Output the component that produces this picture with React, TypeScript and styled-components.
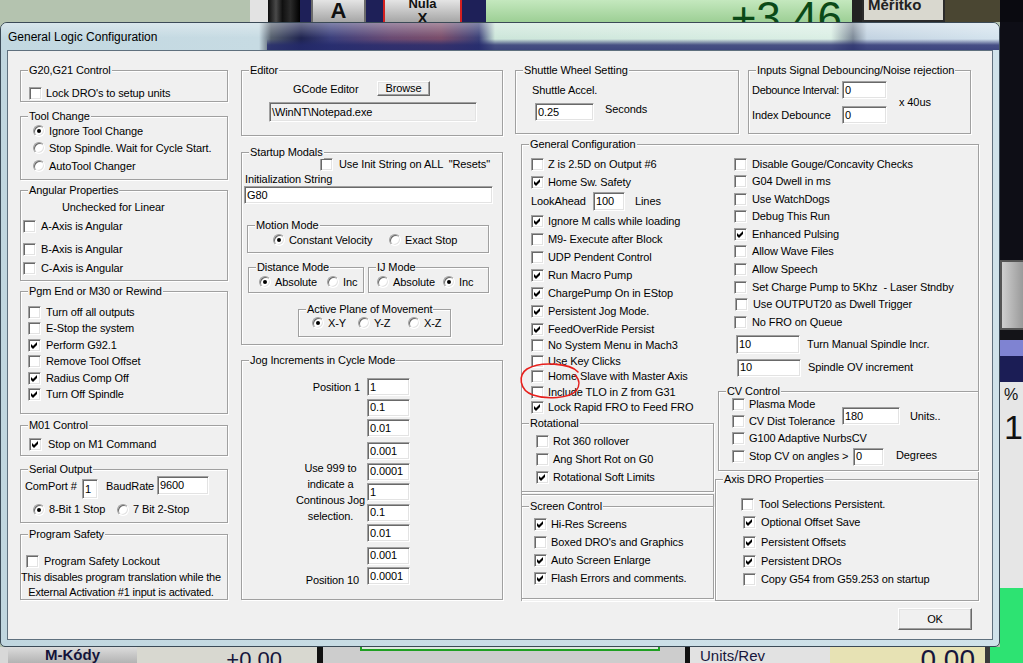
import React from 'react';
import styled, { createGlobalStyle } from 'styled-components';

const GlobalStyle = createGlobalStyle`
  html, body {
    margin: 0;
    padding: 0;
  }
  body {
    width: 1023px;
    height: 663px;
    overflow: hidden;
    background: #14141c;
    font-family: 'Liberation Sans', Arial, sans-serif;
    font-size: 11px;
    letter-spacing: -0.1px;
    color: #000;
  }
`;

const Desktop = styled.div`
  width: 1023px;
  height: 663px;
  display: grid;
  grid-template-columns: 1000px 23px;
  grid-template-rows: 22px 625px 16px;
  background: #b4c3af;
  overflow: hidden;
`;

/* ---------- Mach3 screen behind the dialog ---------- */

const TopStrip = styled.div`
  grid-column: 1 / -1;
  display: flex;
  overflow: hidden;
  letter-spacing: 0;
`;

const BottomStrip = styled.div`
  grid-column: 1 / -1;
  display: flex;
  overflow: hidden;
  letter-spacing: 0;
`;

const SideStrip = styled.div`
  grid-column: 2;
  grid-row: 2;
  display: flex;
  flex-direction: column;
  overflow: hidden;
  letter-spacing: 0;
`;

const Patch = styled.div<{ $w: number; $bg: string }>`
  flex: none;
  width: ${(p) => p.$w}px;
  background: ${(p) => p.$bg};
`;

const VPatch = styled.div<{ $h: number; $bg: string }>`
  flex: none;
  height: ${(p) => p.$h}px;
  background: ${(p) => p.$bg};
`;

const KeyCap = styled.div<{ $w: number; $edge?: string }>`
  flex: none;
  width: ${(p) => p.$w}px;
  box-sizing: border-box;
  background: linear-gradient(to bottom, #e4e4e4, #a6a6a6);
  border-left: 2px solid ${(p) => p.$edge || '#6a6a6a'};
  border-right: 2px solid ${(p) => p.$edge || '#6a6a6a'};
  display: flex;
  flex-direction: column;
  align-items: center;
  font-weight: bold;
  color: #111;
  overflow: hidden;
`;

const KeyText = styled.span<{ $size: number; $mt?: number }>`
  font-size: ${(p) => p.$size}px;
  line-height: ${(p) => p.$size}px;
  margin-top: ${(p) => p.$mt ?? 0}px;
`;

const BigDro = styled.div<{ $w: number }>`
  flex: none;
  width: ${(p) => p.$w}px;
  box-sizing: border-box;
  padding-right: 10px;
  background: linear-gradient(to bottom, #c4e8be, #9dcf95);
  color: #0b4a17;
  font-size: 44px;
  line-height: 36px;
  text-align: right;
  overflow: hidden;
`;

const ScaleBox = styled.div<{ $w: number }>`
  flex: none;
  width: ${(p) => p.$w}px;
  box-sizing: border-box;
  border: 2px solid #2b2b2b;
  border-top: none;
  background: #d9d8cf;
  font-size: 15px;
  font-weight: bold;
  line-height: 10px;
  padding-left: 4px;
  color: #222;
  overflow: hidden;
`;

const SideKey = styled.div<{ $h: number }>`
  flex: none;
  height: ${(p) => p.$h}px;
  box-sizing: border-box;
  border: 2px solid #555;
  border-right: none;
  background: linear-gradient(to right, #cfcfcf, #9a9a9a);
`;

const SideReadout = styled.div<{ $h: number }>`
  flex: none;
  height: ${(p) => p.$h}px;
  box-sizing: border-box;
  padding: 4px 0 0 4px;
  background: #e6e6e6;
  color: #111;
  display: flex;
  flex-direction: column;
  overflow: hidden;
`;

const ReadoutSign = styled.span`
  font-size: 16px;
  line-height: 18px;
`;

const ReadoutBig = styled.span`
  font-size: 34px;
  line-height: 34px;
  margin-top: 6px;
`;

const BottomKey = styled.div<{ $w: number }>`
  flex: none;
  width: ${(p) => p.$w}px;
  background: linear-gradient(to bottom, #dcdcdc, #b3b3b3);
  color: #14143a;
  font-weight: bold;
  font-size: 15px;
  line-height: 16px;
  text-align: center;
  overflow: hidden;
`;

const SmallDro = styled.div<{ $w: number; $bg: string; $size: number; $pr: number }>`
  flex: none;
  width: ${(p) => p.$w}px;
  box-sizing: border-box;
  padding-right: ${(p) => p.$pr}px;
  background: ${(p) => p.$bg};
  color: #16163c;
  font-size: ${(p) => p.$size}px;
  line-height: 26px;
  text-align: right;
  overflow: hidden;
`;

const GaugeArea = styled.div<{ $w: number }>`
  flex: none;
  width: ${(p) => p.$w}px;
  background: #cdcdcd;
`;

const GaugeBar = styled.div`
  margin-left: 37px;
  width: 300px;
  height: 4px;
  box-sizing: border-box;
  border: 2px solid #1f9f22;
  border-top: none;
  background: #dfe9df;
`;

const Caption = styled.div<{ $w: number }>`
  flex: none;
  width: ${(p) => p.$w}px;
  box-sizing: border-box;
  padding-left: 10px;
  background: #e2e2e2;
  color: #16163c;
  font-size: 15px;
  line-height: 18px;
  overflow: hidden;
`;

/* ---------- the dialog window ---------- */

const Window = styled.div`
  grid-column: 1;
  grid-row: 2;
  box-sizing: border-box;
  display: flex;
  flex-direction: column;
  border: 1px solid #3b4a57;
  border-radius: 7px 7px 5px 5px;
  background: linear-gradient(to right, #c0d6df, #c9dde5 40%, #d0e2ea);
  overflow: hidden;
`;

const TitleBar = styled.div`
  flex: none;
  height: 27px;
  display: flex;
  align-items: center;
  padding-left: 7px;
  font-size: 12px;
  letter-spacing: 0;
  color: #000;
  background:
    linear-gradient(to bottom, rgba(255, 255, 255, 0.35), rgba(255, 255, 255, 0) 55%),
    linear-gradient(to bottom, rgba(36, 42, 108, 0) 16px, rgba(36, 42, 108, 0.8) 22px, rgba(36, 42, 108, 0.85) 27px) right top / calc(100% - 266px) 100% no-repeat,
    linear-gradient(
      to right,
      #c2d8e1 0,
      #c7dbe3 258px,
      #56606e 270px,
      #1f2450 300px,
      #3b3f7c 330px,
      #6a4a72 390px,
      #7a4d6a 440px,
      #3a4078 478px,
      #cde6da 494px,
      #dbefe5 830px,
      #7d8a98 852px,
      #c4d4e2 866px,
      #d5e4ee 100%
    );
`;

const Client = styled.div`
  position: relative;
  flex: 1;
  margin: 0 6px 6px;
  border: 1px solid #5f707e;
  background: #f0f0f0;
  display: flex;
  flex-direction: column;
  padding: 19px 0 0 12px;
`;

const Columns = styled.div`
  display: grid;
  grid-template-columns: 208px 262px 464px;
  column-gap: 13px;
  align-items: start;
`;

const Column = styled.div<{ $ml?: number }>`
  display: flex;
  flex-direction: column;
  margin-left: ${(p) => p.$ml ?? 0}px;
`;

const Footer = styled.div`
  display: flex;
  justify-content: flex-end;
  padding-right: 20px;
  margin-top: 7px;
`;

/* ---------- win32 classic controls ---------- */

const Group = styled.div<{ $h: number; $w?: number; $mt?: number; $ml?: number; $open?: boolean }>`
  position: relative;
  flex: none;
  box-sizing: border-box;
  height: ${(p) => p.$h}px;
  width: ${(p) => (p.$w ? `${p.$w}px` : 'auto')};
  margin-top: ${(p) => p.$mt ?? 0}px;
  margin-left: ${(p) => p.$ml ?? 0}px;
  border: 1px solid #a0a0a0;
  ${(p) => p.$open && 'border-bottom: none;'}
  box-shadow: inset 1px 1px 0 #fff, 1px 1px 0 #fff;
`;

const Legend = styled.span`
  position: absolute;
  top: -7px;
  left: 7px;
  padding: 0 1px;
  background: #f0f0f0;
  line-height: 13px;
  white-space: nowrap;
`;

const Divider = styled.div`
  flex: none;
  width: 193px;
  height: 12px;
  box-sizing: border-box;
  margin: 2px 0 0 -1px;
  border: 1px solid #a0a0a0;
  border-bottom: none;
  box-shadow: inset 1px 1px 0 #fff;
`;

const Stack = styled.div<{ $pt?: number; $pl?: number; $gap?: number }>`
  display: flex;
  flex-direction: column;
  align-items: flex-start;
  padding-top: ${(p) => p.$pt ?? 0}px;
  padding-left: ${(p) => p.$pl ?? 0}px;
  gap: ${(p) => p.$gap ?? 0}px;
`;

const Row = styled.div<{ $h?: number; $mt?: number; $ml?: number; $align?: string }>`
  display: flex;
  flex: none;
  align-items: ${(p) => p.$align ?? 'center'};
  height: ${(p) => (p.$h ? `${p.$h}px` : 'auto')};
  margin-top: ${(p) => p.$mt ?? 0}px;
  margin-left: ${(p) => p.$ml ?? 0}px;
`;

const OptionRow = styled.div<{ $mt?: number; $ml?: number; $gap: number; $w?: number }>`
  display: flex;
  flex: none;
  align-items: center;
  height: 13px;
  width: ${(p) => (p.$w ? `${p.$w}px` : 'auto')};
  margin-top: ${(p) => p.$mt ?? 0}px;
  margin-left: ${(p) => p.$ml ?? 0}px;
  gap: ${(p) => p.$gap}px;
  line-height: 13px;
  white-space: pre;
`;

const CheckBox = styled.span`
  flex: none;
  width: 13px;
  height: 13px;
  box-sizing: border-box;
  border: 1px solid;
  border-color: #a0a0a0 #fff #fff #a0a0a0;
  box-shadow: inset 1px 1px 0 #696969, inset -1px -1px 0 #e3e3e3;
  background: #fff;
  display: flex;
  align-items: center;
  justify-content: center;
`;

const RadioDot = styled.span<{ $on?: boolean }>`
  flex: none;
  width: 12px;
  height: 12px;
  box-sizing: border-box;
  border-radius: 50%;
  border: 1px solid;
  border-color: #a0a0a0 #fff #fff #a0a0a0;
  box-shadow: inset 1px 1px 0 #696969, inset -1px -1px 0 #e3e3e3;
  background: #fff;
  display: flex;
  align-items: center;
  justify-content: center;

  &::after {
    content: '';
    width: 4px;
    height: 4px;
    border-radius: 50%;
    background: ${(p) => (p.$on ? '#000' : 'transparent')};
  }
`;

const Edit = styled.div<{ $w: number; $h?: number; $mt?: number; $ml?: number; $off?: boolean }>`
  flex: none;
  box-sizing: border-box;
  width: ${(p) => p.$w}px;
  height: ${(p) => p.$h ?? 19}px;
  margin-top: ${(p) => p.$mt ?? 0}px;
  margin-left: ${(p) => p.$ml ?? 0}px;
  border: 1px solid;
  border-color: #a0a0a0 #fff #fff #a0a0a0;
  box-shadow: inset 1px 1px 0 #696969, inset -1px -1px 0 #e3e3e3;
  background: ${(p) => (p.$off ? '#f0f0f0' : '#fff')};
  padding-left: 2px;
  display: flex;
  align-items: center;
  line-height: 13px;
  white-space: nowrap;
  overflow: hidden;
`;

const PushButton = styled.div<{ $w: number; $h: number }>`
  flex: none;
  box-sizing: border-box;
  width: ${(p) => p.$w}px;
  height: ${(p) => p.$h}px;
  border: 1px solid;
  border-color: #fff #696969 #696969 #fff;
  box-shadow: inset -1px -1px 0 #a0a0a0, inset 1px 1px 0 #e3e3e3;
  background: #f0f0f0;
  display: flex;
  align-items: center;
  justify-content: center;
  line-height: 13px;
`;

const Label = styled.span<{ $w?: number; $mt?: number; $ml?: number }>`
  display: block;
  flex: none;
  width: ${(p) => (p.$w ? `${p.$w}px` : 'auto')};
  margin-top: ${(p) => p.$mt ?? 0}px;
  margin-left: ${(p) => p.$ml ?? 0}px;
  line-height: 13px;
  white-space: pre;
`;

const TightLabel = styled(Label)`
  letter-spacing: -0.3px;
`;

const Note = styled.div<{ $w: number; $mt?: number; $ml?: number }>`
  width: ${(p) => p.$w}px;
  margin-top: ${(p) => p.$mt ?? 0}px;
  margin-left: ${(p) => p.$ml ?? 0}px;
  line-height: 15px;
  text-align: center;
  white-space: pre;
  letter-spacing: -0.2px;
`;

const DebounceGrid = styled.div`
  display: grid;
  grid-template-columns: 90px 45px auto;
  row-gap: 7px;
  align-items: center;
  padding: 10px 0 0 3px;
`;

const UnitNote = styled.span`
  grid-column: 3;
  grid-row: 1 / 3;
  margin-left: 12px;
  line-height: 13px;
`;

const JogGrid = styled.div`
  display: grid;
  grid-template-columns: 125px 43px;
  padding-top: 17px;
`;

const JogLabel = styled.div<{ $row: string; $pr: number; $pt?: number }>`
  grid-column: 1;
  grid-row: ${(p) => p.$row};
  justify-self: end;
  align-self: center;
  padding-right: ${(p) => p.$pr}px;
  padding-top: ${(p) => p.$pt ?? 0}px;
  text-align: center;
  line-height: 16px;
  white-space: pre;
`;

const JogEdit = styled(Edit)<{ $row: number }>`
  grid-column: 2;
  grid-row: ${(p) => p.$row};
`;

const ConfigGrid = styled.div`
  display: grid;
  grid-template-columns: 191px 265px;
  align-items: start;
`;

const Annotation = styled.svg`
  position: absolute;
  left: 511px;
  top: 311px;
  overflow: visible;
  pointer-events: none;
`;

/* ---------- small building blocks ---------- */

type OptProps = {
  on?: boolean;
  mt?: number;
  ml?: number;
  gap?: number;
  w?: number;
  children: React.ReactNode;
};

const Tick = () => (
  <svg width="7" height="7" viewBox="0 0 7 7">
    <path d="M0 2L2 4L6 0V3L2 7L0 5Z" fill="#000" />
  </svg>
);

const Check = ({ on, mt, ml, gap, w, children }: OptProps) => (
  <OptionRow $mt={mt} $ml={ml} $gap={gap ?? 5} $w={w}>
    <CheckBox>{on && <Tick />}</CheckBox>
    <span>{children}</span>
  </OptionRow>
);

const Radio = ({ on, mt, ml, gap, w, children }: OptProps) => (
  <OptionRow $mt={mt} $ml={ml} $gap={gap ?? 4} $w={w}>
    <RadioDot $on={on} />
    <span>{children}</span>
  </OptionRow>
);

const jogSteps = ['1', '0.1', '0.01', '0.001', '0.0001', '1', '0.1', '0.01', '0.001', '0.0001'];
const jogGaps = [0, 2.5, 2.5, 5.3, 2.5, 2.5, 2.5, 2.5, 4.4, 2.5];

const App = () => {
  return (
    <>
      <GlobalStyle />
      <Desktop>
        <TopStrip>
          <Patch $w={250} $bg="#b4c3af" />
          <Patch $w={18} $bg="#e3e3e3" />
          <Patch $w={32} $bg="linear-gradient(to right, #0c0c0c, #4a4a4a 25%, #101010 45%, #2a2a2a 70%, #000)" />
          <Patch $w={11} $bg="#1e2058" />
          <KeyCap $w={55}>
            <KeyText $size={22} $mt={0}>A</KeyText>
          </KeyCap>
          <Patch $w={17} $bg="#1e2058" />
          <KeyCap $w={79} $edge="#d42020">
            <KeyText $size={13} $mt={-3}>Nula</KeyText>
            <KeyText $size={15}>X</KeyText>
          </KeyCap>
          <Patch $w={24} $bg="#1e2058" />
          <BigDro $w={366}>+3.46</BigDro>
          <Patch $w={10} $bg="#222" />
          <ScaleBox $w={83}>Měřítko</ScaleBox>
          <Patch $w={55} $bg="#4a4632" />
          <Patch $w={23} $bg="#0a0a10" />
        </TopStrip>

        <Window>
          <TitleBar>General Logic Configuration</TitleBar>
          <Client>
            <Columns>
              <Column>
                <Group $h={32}>
                  <Legend>G20,G21 Control</Legend>
                  <Stack $pt={15.5} $pl={8}>
                    <Check gap={4}>Lock DRO's to setup units</Check>
                  </Stack>
                </Group>

                <Group $h={64} $mt={14}>
                  <Legend>Tool Change</Legend>
                  <Stack $pt={7.5} $pl={12} $gap={4}>
                    <Radio on>Ignore Tool Change</Radio>
                    <Radio>Stop Spindle. Wait for Cycle Start.</Radio>
                    <Radio mt={1}>AutoTool Changer</Radio>
                  </Stack>
                </Group>

                <Group $h={91} $mt={10}>
                  <Legend>Angular Properties</Legend>
                  <Stack $pt={9.5} $pl={2}>
                    <Label $ml={39}>Unchecked for Linear</Label>
                    <Check mt={6}>A-Axis is Angular</Check>
                    <Check mt={10}>B-Axis is Angular</Check>
                    <Check mt={6}>C-Axis is Angular</Check>
                  </Stack>
                </Group>

                <Group $h={123} $mt={10}>
                  <Legend>Pgm End or M30 or Rewind</Legend>
                  <Stack $pt={13.5} $pl={7} $gap={3.6}>
                    <Check>Turn off all outputs</Check>
                    <Check>E-Stop the system</Check>
                    <Check on>Perform G92.1</Check>
                    <Check>Remove Tool Offset</Check>
                    <Check on>Radius Comp Off</Check>
                    <Check on>Turn Off Spindle</Check>
                  </Stack>
                </Group>

                <Group $h={31} $mt={11}>
                  <Legend>M01 Control</Legend>
                  <Stack $pt={12} $pl={8}>
                    <Check on gap={6}>Stop on M1 Command</Check>
                  </Stack>
                </Group>

                <Group $h={54} $mt={13}>
                  <Legend>Serial Output</Legend>
                  <Stack $pt={6} $pl={4}>
                    <Row $align="flex-start">
                      <Label $w={57} $mt={3.5}>ComPort #</Label>
                      <Edit $w={16} $h={20} $mt={3}>1</Edit>
                      <Label $w={51} $ml={8} $mt={3.5}>BaudRate</Label>
                      <Edit $w={52} $h={19}>9600</Edit>
                    </Row>
                    <Row $mt={4} $ml={8}>
                      <Radio on w={84}>8-Bit 1 Stop</Radio>
                      <Radio>7 Bit 2-Stop</Radio>
                    </Row>
                  </Stack>
                </Group>

                <Group $h={66} $mt={11}>
                  <Legend>Program Safety</Legend>
                  <Stack $pt={19.5} $pl={5}>
                    <Check gap={5}>Program Safety Lockout</Check>
                    <Note $w={200} $mt={2} $ml={-5}>
                      {'This disables program translation while the\nExternal Activation #1 input is activated.'}
                    </Note>
                  </Stack>
                </Group>
              </Column>

              <Column>
                <Group $h={66}>
                  <Legend>Editor</Legend>
                  <Stack $pt={10}>
                    <Row $ml={51} $h={15}>
                      <Label $w={84} $mt={2}>GCode Editor</Label>
                      <PushButton $w={53} $h={15}>Browse</PushButton>
                    </Row>
                    <Edit $w={208} $h={20} $ml={27} $mt={6} $off>
                      {'\\WinNT\\Notepad.exe'}
                    </Edit>
                  </Stack>
                </Group>

                <Group $h={193} $mt={16}>
                  <Legend>Startup Modals</Legend>
                  <Stack $pt={4.5}>
                    <Check ml={78} gap={6}>{'Use Init String on ALL  "Resets"'}</Check>
                    <Label $ml={3} $mt={2}>Initialization String</Label>
                    <Edit $w={249} $h={18} $ml={2} $mt={0.5}>G80</Edit>

                    <Group $h={28} $w={242} $ml={5} $mt={21}>
                      <Legend>Motion Mode</Legend>
                      <Stack $pt={7.5} $pl={25}>
                        <Row>
                          <Radio on w={116}>Constant Velocity</Radio>
                          <Radio>Exact Stop</Radio>
                        </Row>
                      </Stack>
                    </Group>

                    <Row $mt={14} $ml={6} $align="flex-start">
                      <Group $h={26} $w={116}>
                        <Legend>Distance Mode</Legend>
                        <Stack $pt={7.5} $pl={10}>
                          <Row>
                            <Radio on w={68}>Absolute</Radio>
                            <Radio>Inc</Radio>
                          </Row>
                        </Stack>
                      </Group>
                      <Group $h={26} $w={121} $ml={4}>
                        <Legend>IJ Mode</Legend>
                        <Stack $pt={7.5} $pl={8}>
                          <Row>
                            <Radio w={66}>Absolute</Radio>
                            <Radio on>Inc</Radio>
                          </Row>
                        </Stack>
                      </Group>
                    </Row>

                    <Group $h={28} $w={153} $ml={56} $mt={16}>
                      <Legend>Active Plane of Movement</Legend>
                      <Stack $pt={6.5} $pl={13}>
                        <Row>
                          <Radio on w={46}>X-Y</Radio>
                          <Radio w={50}>Y-Z</Radio>
                          <Radio>X-Z</Radio>
                        </Row>
                      </Stack>
                    </Group>
                  </Stack>
                </Group>

                <Group $h={240} $mt={15}>
                  <Legend>Jog Increments in Cycle Mode</Legend>
                  <JogGrid>
                    <JogLabel $row="1" $pr={7}>Position 1</JogLabel>
                    <JogLabel $row="4 / 9" $pr={2} $pt={4}>
                      {'Use 999 to\nindicate a\nContinous Jog\nselection.'}
                    </JogLabel>
                    <JogLabel $row="10" $pr={8} $pt={7}>Position 10</JogLabel>
                    {jogSteps.map((v, i) => (
                      <JogEdit key={i} $row={i + 1} $w={43} $h={18} $mt={jogGaps[i]}>
                        {v}
                      </JogEdit>
                    ))}
                  </JogGrid>
                </Group>
              </Column>

              <Column $ml={-1}>
                <Row $align="flex-start">
                  <Group $h={64} $w={224}>
                    <Legend>Shuttle Wheel Setting</Legend>
                    <Stack $pt={12.5} $pl={16}>
                      <Label>Shuttle Accel.</Label>
                      <Row $mt={6.5} $ml={3} $align="flex-start">
                        <Edit $w={59} $h={18}>0.25</Edit>
                        <Label $ml={11}>Seconds</Label>
                      </Row>
                    </Stack>
                  </Group>
                  <Group $h={64} $w={223} $ml={9}>
                    <Legend>Inputs Signal Debouncing/Noise rejection</Legend>
                    <DebounceGrid>
                      <TightLabel>Debounce Interval:</TightLabel>
                      <Edit $w={45} $h={18}>0</Edit>
                      <UnitNote>x 40us</UnitNote>
                      <Label>Index Debounce</Label>
                      <Edit $w={45} $h={18}>0</Edit>
                    </DebounceGrid>
                  </Group>
                </Row>

                <Group $h={457} $w={458} $ml={6} $mt={10} $open>
                  <Legend>General Configuration</Legend>
                  <ConfigGrid>
                    <Column>
                      <Stack $pt={12.5} $pl={9} $gap={5.1}>
                        <Check gap={4}>Z is 2.5D on Output #6</Check>
                        <Check on gap={4}>Home Sw. Safety</Check>
                        <Row $h={16}>
                          <Label $w={62}>LookAhead</Label>
                          <Edit $w={32} $h={19}>100</Edit>
                          <Label $ml={10}>Lines</Label>
                        </Row>
                        <Check on gap={4}>Ignore M calls while loading</Check>
                        <Check gap={4}>M9- Execute after Block</Check>
                        <Check gap={4}>UDP Pendent Control</Check>
                        <Check on gap={4}>Run Macro Pump</Check>
                        <Check on gap={4}>ChargePump On in EStop</Check>
                        <Check on gap={4}>Persistent Jog Mode.</Check>
                        <Check on gap={4}>FeedOverRide Persist</Check>
                        <Check gap={4} mt={-2.5}>No System Menu in Mach3</Check>
                        <Check gap={4} mt={-2.5}>Use Key Clicks</Check>
                        <Check gap={4} mt={-2.5}>Home Slave with Master Axis</Check>
                        <Check gap={4} mt={-2.5}>Include TLO in Z from G31</Check>
                        <Check on gap={4} mt={-2.5}>Lock Rapid FRO to Feed FRO</Check>
                      </Stack>

                      <Group $h={69} $w={193} $ml={-1} $mt={8.5}>
                        <Legend>Rotational</Legend>
                        <Stack $pt={11.5} $pl={14} $gap={5}>
                          <Check gap={4}>Rot 360 rollover</Check>
                          <Check gap={4}>Ang Short Rot on G0</Check>
                          <Check on gap={4}>Rotational Soft Limits</Check>
                        </Stack>
                      </Group>

                      <Divider />

                      <Group $h={93} $w={193} $ml={-1}>
                        <Legend>Screen Control</Legend>
                        <Stack $pt={11.5} $pl={12} $gap={5}>
                          <Check on gap={4}>Hi-Res Screens</Check>
                          <Check gap={4}>Boxed DRO's and Graphics</Check>
                          <Check on gap={4}>Auto Screen Enlarge</Check>
                          <Check on gap={4}>Flash Errors and comments.</Check>
                        </Stack>
                      </Group>
                    </Column>

                    <Column>
                      <Stack $pt={12.5} $pl={21} $gap={4.6}>
                        <Check>Disable Gouge/Concavity Checks</Check>
                        <Check>G04 Dwell in ms</Check>
                        <Check>Use WatchDogs</Check>
                        <Check>Debug This Run</Check>
                        <Check on>Enhanced Pulsing</Check>
                        <Check>Allow Wave Files</Check>
                        <Check>Allow Speech</Check>
                        <Check>{'Set Charge Pump to 5Khz  - Laser Stndby'}</Check>
                        <Check ml={1}>Use OUTPUT20 as Dwell Trigger</Check>
                        <Check>No FRO on Queue</Check>
                        <Row $mt={1.5} $h={19}>
                          <Edit $w={64} $h={19} $ml={2}>10</Edit>
                          <Label $ml={7}>Turn Manual Spindle Incr.</Label>
                        </Row>
                        <Row $mt={0.4} $h={18}>
                          <Edit $w={64} $h={18} $ml={3}>10</Edit>
                          <Label $ml={7}>Spindle OV increment</Label>
                        </Row>
                      </Stack>

                      <Group $h={80} $w={261} $ml={5} $mt={14}>
                        <Legend>CV Control</Legend>
                        <Stack $pt={5} $pl={13}>
                          <Row $h={16}>
                            <Check gap={4}>Plasma Mode</Check>
                          </Row>
                          <Row $h={17}>
                            <Check gap={4} w={110}>CV Dist Tolerance</Check>
                            <Edit $w={58} $h={18} $mt={-10}>180</Edit>
                            <Label $ml={10} $mt={-9}>Units..</Label>
                          </Row>
                          <Row $h={18}>
                            <Check gap={4}>G100 Adaptive NurbsCV</Check>
                          </Row>
                          <Row $h={18}>
                            <Check gap={4} w={121}>{'Stop CV on angles >'}</Check>
                            <Edit $w={31} $h={18}>0</Edit>
                            <Label $ml={12} $mt={-2}>Degrees</Label>
                          </Row>
                        </Stack>
                      </Group>

                      <Group $h={122} $w={264} $ml={2} $mt={8}>
                        <Legend>Axis DRO Properties</Legend>
                        <Stack $pt={18.5} $pl={25}>
                          <Check>Tool Selections Persistent.</Check>
                          <Check on ml={2} mt={5}>Optional Offset Save</Check>
                          <Check on ml={2} mt={7}>Persistent Offsets</Check>
                          <Check on ml={2} mt={6}>Persistent DROs</Check>
                          <Check ml={2} mt={5}>Copy G54 from G59.253 on startup</Check>
                        </Stack>
                      </Group>
                    </Column>
                  </ConfigGrid>
                </Group>
              </Column>
            </Columns>

            <Footer>
              <PushButton $w={74} $h={22}>OK</PushButton>
            </Footer>

            <Annotation width="62" height="37" viewBox="0 0 62 37">
              <path
                d="M59 10C51 1 21 -1 8 7C-1 13 0 28 14 33C28 38 50 36 57 29C61 24 61 18 56 13"
                fill="none"
                stroke="#e8201c"
                strokeWidth="1.6"
                strokeLinecap="round"
              />
            </Annotation>
          </Client>
        </Window>

        <SideStrip>
          <VPatch $h={238} $bg="#0e0e16" />
          <SideKey $h={70} />
          <VPatch $h={10} $bg="#141418" />
          <VPatch $h={16} $bg="#7f83d2" />
          <VPatch $h={26} $bg="#1b1d55" />
          <SideReadout $h={206}>
            <ReadoutSign>%</ReadoutSign>
            <ReadoutBig>10</ReadoutBig>
          </SideReadout>
          <VPatch $h={59} $bg="#2de372" />
        </SideStrip>

        <BottomStrip>
          <Patch $w={8} $bg="#d8d8d8" />
          <BottomKey $w={129}>M-Kódy</BottomKey>
          <SmallDro $w={180} $bg="#d8d8d0" $size={22} $pr={35}>+0.00</SmallDro>
          <Patch $w={6} $bg="#111" />
          <GaugeArea $w={362}>
            <GaugeBar />
          </GaugeArea>
          <Patch $w={5} $bg="#111" />
          <Caption $w={140}>Units/Rev</Caption>
          <SmallDro $w={155} $bg="#e7e2b4" $size={28} $pr={10}>0.00</SmallDro>
          <Patch $w={5} $bg="#3a3a3a" />
          <Patch $w={33} $bg="#2de372" />
        </BottomStrip>
      </Desktop>
    </>
  );
};

export default App;
